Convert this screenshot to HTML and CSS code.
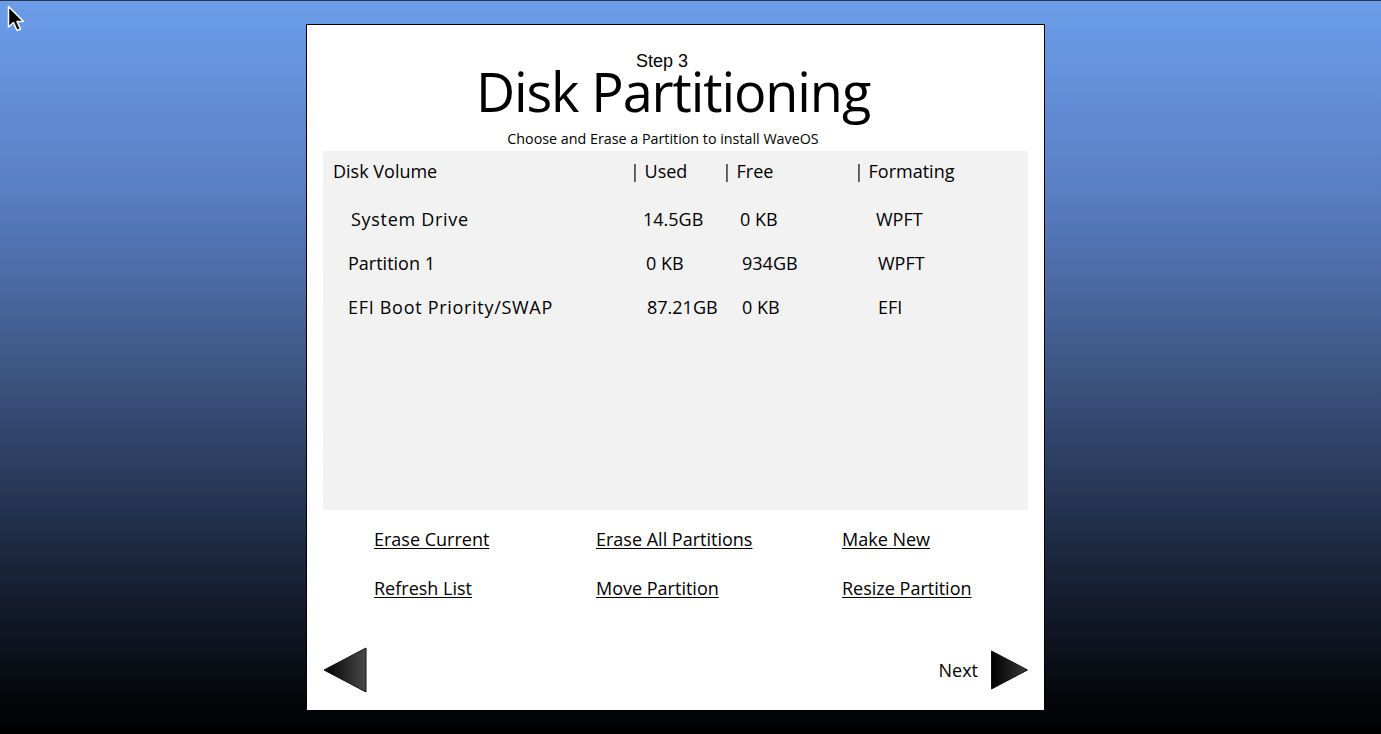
FILE: index.html
```html
<!DOCTYPE html>
<html>
<head>
<meta charset="utf-8">
<link rel="stylesheet" href="styles.css">
</head>
<body>
<div class="screen">
  <svg class="cursor" width="20" height="28" viewBox="0 0 20 28">
    <path d="M1.5 1.5 L1.5 22 L6.5 17.5 L10 25.5 L13.5 24 L10 16.5 L16.5 16.5 Z" fill="#000" stroke="#fff" stroke-width="1.5" stroke-linejoin="round"/>
  </svg>
  <div class="panel">
    <div class="head">
      <div class="step">Step 3</div>
      <h1 class="title">Disk Partitioning</h1>
      <div class="subtitle">Choose and Erase a Partition to install WaveOS</div>
    </div>
    <div class="list">
      <div class="row header">
        <span class="c1">Disk Volume</span>
        <span class="c2"><span class="pipe">|</span> Used</span>
        <span class="c3"><span class="pipe">|</span> Free</span>
        <span class="c4"><span class="pipe">|</span> Formating</span>
      </div>
      <div class="row item r1">
        <span class="c1 wide">System Drive</span>
        <span class="c2">14.5GB</span>
        <span class="c3">0 KB</span>
        <span class="c4">WPFT</span>
      </div>
      <div class="row item r2">
        <span class="c1">Partition 1</span>
        <span class="c2">0 KB</span>
        <span class="c3">934GB</span>
        <span class="c4">WPFT</span>
      </div>
      <div class="row item r3">
        <span class="c1 wide">EFI Boot Priority/SWAP</span>
        <span class="c2">87.21GB</span>
        <span class="c3">0 KB</span>
        <span class="c4">EFI</span>
      </div>
    </div>
    <div class="actions">
      <a class="act">Erase Current</a>
      <a class="act">Erase All Partitions</a>
      <a class="act">Make New</a>
      <a class="act">Refresh List</a>
      <a class="act">Move Partition</a>
      <a class="act">Resize Partition</a>
    </div>
    <div class="nav">
      <svg class="arrow-left" width="44" height="46" viewBox="0 0 44 46">
        <defs>
          <linearGradient id="gl" x1="0" y1="0" x2="1" y2="0">
            <stop offset="0" stop-color="#000"/>
            <stop offset="1" stop-color="#4a4a4a"/>
          </linearGradient>
        </defs>
        <path d="M43 1 L43 45 L1 23 Z" fill="url(#gl)" stroke="#111" stroke-width="1"/>
      </svg>
      <div class="next">
        <span class="next-label">Next</span>
        <svg class="arrow-right" width="37" height="40" viewBox="0 0 37 40">
          <defs>
            <linearGradient id="gr" x1="0" y1="0" x2="1" y2="0">
              <stop offset="0" stop-color="#000"/>
              <stop offset="1" stop-color="#3a3a3a"/>
            </linearGradient>
          </defs>
          <path d="M0.5 1 L0.5 39 L36.5 20 Z" fill="url(#gr)" stroke="#111" stroke-width="1"/>
        </svg>
      </div>
    </div>
  </div>
</div>
</body>
</html>
```

FILE: styles.css
```css
html, body {
  margin: 0;
  padding: 0;
}
body {
  width: 1381px;
  height: 734px;
  overflow: hidden;
  font-family: "Open Sans", "Noto Sans", sans-serif;
  color: #000;
}
.screen {
  position: relative;
  width: 1381px;
  height: 734px;
  box-sizing: border-box;
  border-top: 1px solid #2a3550;
  background: linear-gradient(to bottom, #6b9de9 0%, #5a80c6 25%, #3e5684 50%, #1c2840 75%, #05070c 95%, #000 100%);
  padding-top: 23px;
  padding-left: 306px;
}
.cursor {
  position: absolute;
  left: 7px;
  top: 4px;
}
.panel {
  width: 739px;
  height: 686px;
  box-sizing: border-box;
  background: #fff;
  border: 1px solid #000;
  border-bottom: none;
  padding: 0 16px 0 16px;
  display: flex;
  flex-direction: column;
}
.head {
  display: flex;
  flex-direction: column;
  align-items: center;
  padding-top: 28px;
  height: 126px;
  box-sizing: border-box;
}
.step {
  font-family: "Liberation Sans", Arial, sans-serif;
  font-size: 18px;
  line-height: 16px;
  margin-left: -27px;
}
.title {
  margin: 0 0 0 -5px;
  font-weight: 400;
  font-size: 54px;
  line-height: 44px;
  letter-spacing: -1.1px;
}
.subtitle {
  font-size: 14.3px;
  line-height: 18px;
  margin-top: 17px;
  margin-left: -25px;
}
.list {
  background: #f2f2f2;
  height: 359px;
  box-sizing: border-box;
  padding-top: 8px;
}
.row {
  display: grid;
  grid-template-columns: 297px 92px 132px 1fr;
  font-size: 18px;
  line-height: 25px;
}
.pipe {
  display: inline-block;
  will-change: transform;
  transform: translateZ(0);
  color: #000;
}
.header {
  padding-left: 10px;
  height: 38px;
}
.item {
  height: 44px;
  align-items: center;
}
.wide {
  letter-spacing: 0.7px;
}
.r1 { padding-left: 28px; }
.r1 .c2 { margin-left: -5px; }
.r1 .c3 { margin-left: 0px; }
.r1 .c4 { margin-left: 4px; }
.r2 { padding-left: 25px; }
.r2 .c2 { margin-left: 1px; }
.r2 .c3 { margin-left: 5px; }
.r2 .c4 { margin-left: 9px; }
.r3 { padding-left: 25px; }
.r3 .c2 { margin-left: 2px; }
.r3 .c3 { margin-left: 5px; }
.r3 .c4 { margin-left: 9px; }
.actions {
  display: grid;
  grid-template-columns: 222px 246px 1fr;
  row-gap: 25px;
  padding-left: 51px;
  padding-top: 17px;
  height: 128px;
  box-sizing: border-box;
  align-content: start;
}
.act {
  font-size: 18px;
  line-height: 24px;
  text-decoration: underline;
  text-underline-offset: 2px;
  text-decoration-thickness: 1px;
  justify-self: start;
}
.nav {
  display: flex;
  justify-content: space-between;
  align-items: center;
  height: 50px;
  margin-top: 7px;
}
.arrow-left {
  display: block;
}
.next {
  display: flex;
  align-items: center;
  gap: 13px;
}
.next-label {
  font-size: 18px;
  line-height: 24px;
}
.arrow-right {
  display: block;
}
```
